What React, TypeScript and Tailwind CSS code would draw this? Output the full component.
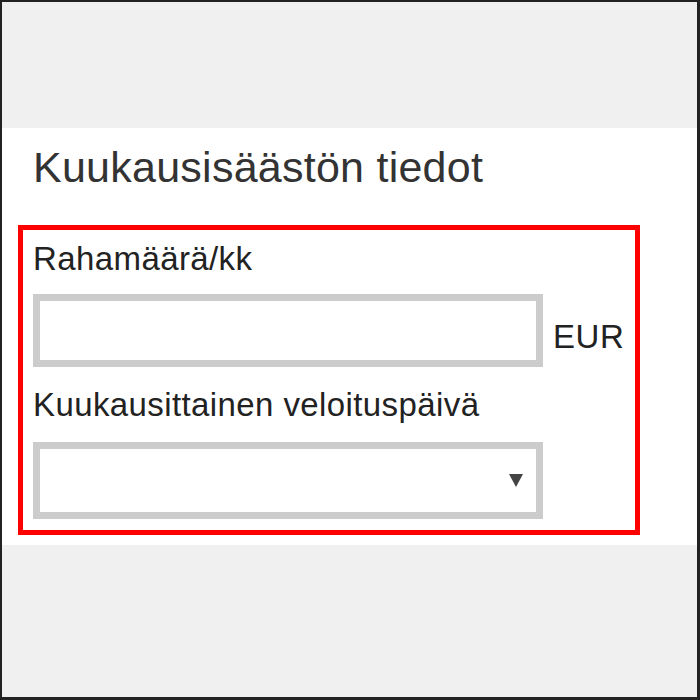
export default function App() {
  return (
    <div
      className="box-border flex h-[700px] w-[700px] flex-col border-t-2 border-l-2 border-r-[3px] border-b-[3px] border-[#222] bg-[#f0f0f0]"
      style={{ fontFamily: '"Liberation Sans", Arial, sans-serif' }}
    >
      <div className="h-[126px] bg-[#f0f0f0]" />
      <div className="flex flex-col bg-white pt-[14px]">
        <h2 className="pl-[31px] text-[43px] font-normal leading-[50px] tracking-[0.25px] text-[#333]">
          Kuukausisäästön tiedot
        </h2>
        <div className="ml-[16px] mt-[33px] mb-[10px] flex w-[622px] flex-col border-[5px] border-[#f00] pt-[10px] pb-[11px] pl-[10px]">
          <label className="text-[33px] leading-[38px] tracking-[0.4px] text-[#222]">Rahamäärä/kk</label>
          <div className="mt-[16px] flex items-end">
            <input
              type="text"
              className="box-border h-[73px] w-[510px] border-[7px] border-[#cccccc] bg-white outline-none"
            />
            <span className="mb-[11px] ml-[10px] text-[33px] leading-[38px] tracking-[0.6px] text-[#222]">EUR</span>
          </div>
          <label className="mt-[19px] text-[33px] leading-[38px] tracking-[0.4px] text-[#222]">
            Kuukausittainen veloituspäivä
          </label>
          <div className="mt-[18px] box-border flex h-[77px] w-[510px] items-center justify-end border-[7px] border-[#cccccc] bg-white pr-[13px]">
            <svg width="14" height="13" viewBox="0 0 14 13">
              <polygon points="0,0 14,0 7,13" fill="#444" />
            </svg>
          </div>
        </div>
      </div>
      <div className="flex-1 bg-[#f0f0f0]" />
    </div>
  );
}
